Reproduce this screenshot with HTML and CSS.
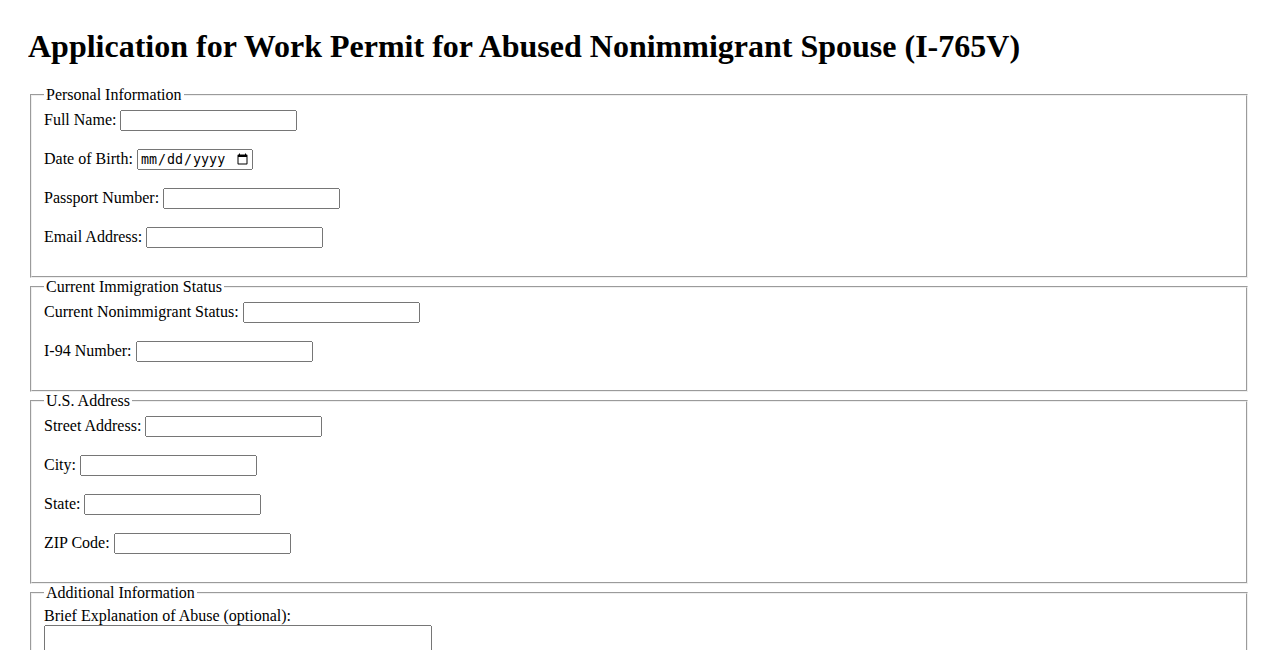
FILE: index.html
```html
<!DOCTYPE html>
<html lang="en">
<head>
    <meta charset="UTF-8">
    <meta name="viewport" content="width=device-width, initial-scale=1.0">
    <title>I-765V Application</title>
    <link rel="stylesheet" href="styles.css">
</head>
<body>
    <h1 class="title">Application for Work Permit for Abused Nonimmigrant Spouse (I-765V)</h1>

    <form>
        <fieldset>
            <legend>Personal Information</legend>
            <label for="full-name">Full Name:</label>
            <input class="field" type="text" id="full-name" name="full-name"><br><br>

            <label for="dob">Date of Birth:</label>
            <input class="date-field" type="date" id="dob" name="dob"><br><br>

            <label for="passport">Passport Number:</label>
            <input class="field" type="text" id="passport" name="passport"><br><br>

            <label for="email">Email Address:</label>
            <input class="field" type="email" id="email" name="email"><br><br>
        </fieldset>

        <fieldset>
            <legend>Current Immigration Status</legend>
            <label for="status">Current Nonimmigrant Status:</label>
            <input class="field" type="text" id="status" name="status"><br><br>

            <label for="i94">I-94 Number:</label>
            <input class="field" type="text" id="i94" name="i94"><br><br>
        </fieldset>

        <fieldset>
            <legend>U.S. Address</legend>
            <label for="street">Street Address:</label>
            <input class="field" type="text" id="street" name="street"><br><br>

            <label for="city">City:</label>
            <input class="field" type="text" id="city" name="city"><br><br>

            <label for="state">State:</label>
            <input class="field" type="text" id="state" name="state"><br><br>

            <label for="zip">ZIP Code:</label>
            <input class="field" type="text" id="zip" name="zip"><br><br>
        </fieldset>

        <fieldset>
            <legend>Additional Information</legend>
            <label for="abuse">Brief Explanation of Abuse (optional):</label><br>
            <textarea class="notes" id="abuse" name="abuse" rows="4" cols="50"></textarea><br><br>
        </fieldset>
    </form>
</body>
</html>
```

FILE: styles.css
```css
body{
    margin: 28px;
    font-family: "Liberation Serif", "Times New Roman", serif;
}

.title{
    margin-top: 0px;
}

.field{
    box-sizing: border-box;
    width: 177px;
}

.date-field{
    box-sizing: border-box;
    width: 116px;
}

.notes{
    box-sizing: border-box;
    width: 388px;
}
```
